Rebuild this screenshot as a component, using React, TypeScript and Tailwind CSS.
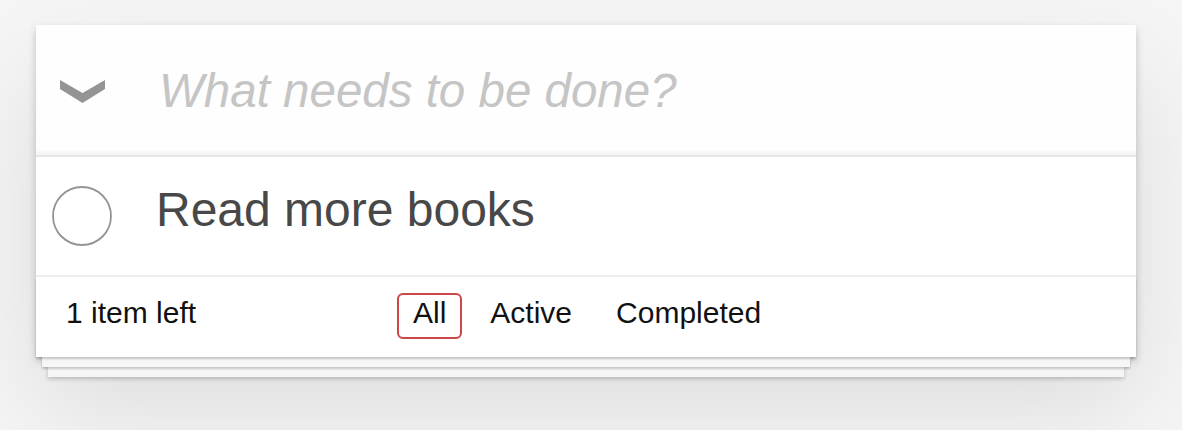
import { useState } from "react";

type Todo = {
  id: number;
  title: string;
  completed: boolean;
};

const filters = ["All", "Active", "Completed"];

export default function App() {
  const [todos] = useState<Todo[]>([{ id: 1, title: "Read more books", completed: false }]);
  const [filter, setFilter] = useState("All");

  const left = todos.filter((t) => !t.completed).length;

  return (
    <div className="min-h-screen bg-[#f5f5f5] pt-[25px] pl-[36px] font-['Liberation_Sans',Arial,sans-serif]">
      <section className="w-[1100px] bg-white shadow-[0_4px_8px_0_rgba(0,0,0,0.2),0_50px_100px_0_rgba(0,0,0,0.1)]">
        {/* header / new todo */}
        <header className="flex items-center h-[130px] bg-[rgba(0,0,0,0.003)] shadow-[inset_0_-4px_2px_rgba(0,0,0,0.03)]">
          <div className="w-[123px] flex pl-[24px] pt-[3px]">
            <svg width="45" height="23" viewBox="0 0 45 23">
              <polygon points="0,0 22.5,13 45,0 45,9 22.5,23 0,9" fill="#949494" />
            </svg>
          </div>
          <input
            className="flex-1 h-full bg-transparent outline-none text-[47.5px] text-[#484848] placeholder:italic placeholder:text-[#c5c5c5]"
            placeholder="What needs to be done?"
          />
        </header>

        {/* list */}
        <ul className="border-t-2 border-[#e6e6e6]">
          {todos.map((todo) => (
            <li key={todo.id} className="flex h-[120px] border-b-2 border-[#ededed]">
              <div className="w-[120px] flex items-center pl-[16px]">
                <svg width="60" height="60" viewBox="0 0 60 60">
                  <circle cx="30" cy="30" r="29" fill="none" stroke="#949494" strokeWidth="1.8" />
                </svg>
              </div>
              <label className="pt-[25px] text-[48px] leading-[56px] text-[#484848]">{todo.title}</label>
            </li>
          ))}
        </ul>

        {/* footer */}
        <footer className="flex h-[80px] px-[30px] pt-[16px] text-[30px] text-[#111] shadow-[0_2px_2px_rgba(0,0,0,0.2),0_16px_0_-6px_#f6f6f6,0_18px_2px_-6px_rgba(0,0,0,0.2),0_32px_0_-12px_#f6f6f6,0_34px_4px_-12px_rgba(0,0,0,0.2)]">
          <span className="w-[331px] pt-[5px] leading-[30px]">
            <strong className="font-normal">{left}</strong> item left
          </span>
          <ul className="flex gap-[12px]">
            {filters.map((f) => (
              <li key={f}>
                <a
                  href="#"
                  onClick={() => setFilter(f)}
                  className={
                    "block h-[46px] px-[14px] pt-[3px] leading-[30px] rounded-[6px] border-2 " +
                    (filter === f ? "border-[#ce4646]" : "border-transparent")
                  }
                >
                  {f}
                </a>
              </li>
            ))}
          </ul>
        </footer>
      </section>
    </div>
  );
}
